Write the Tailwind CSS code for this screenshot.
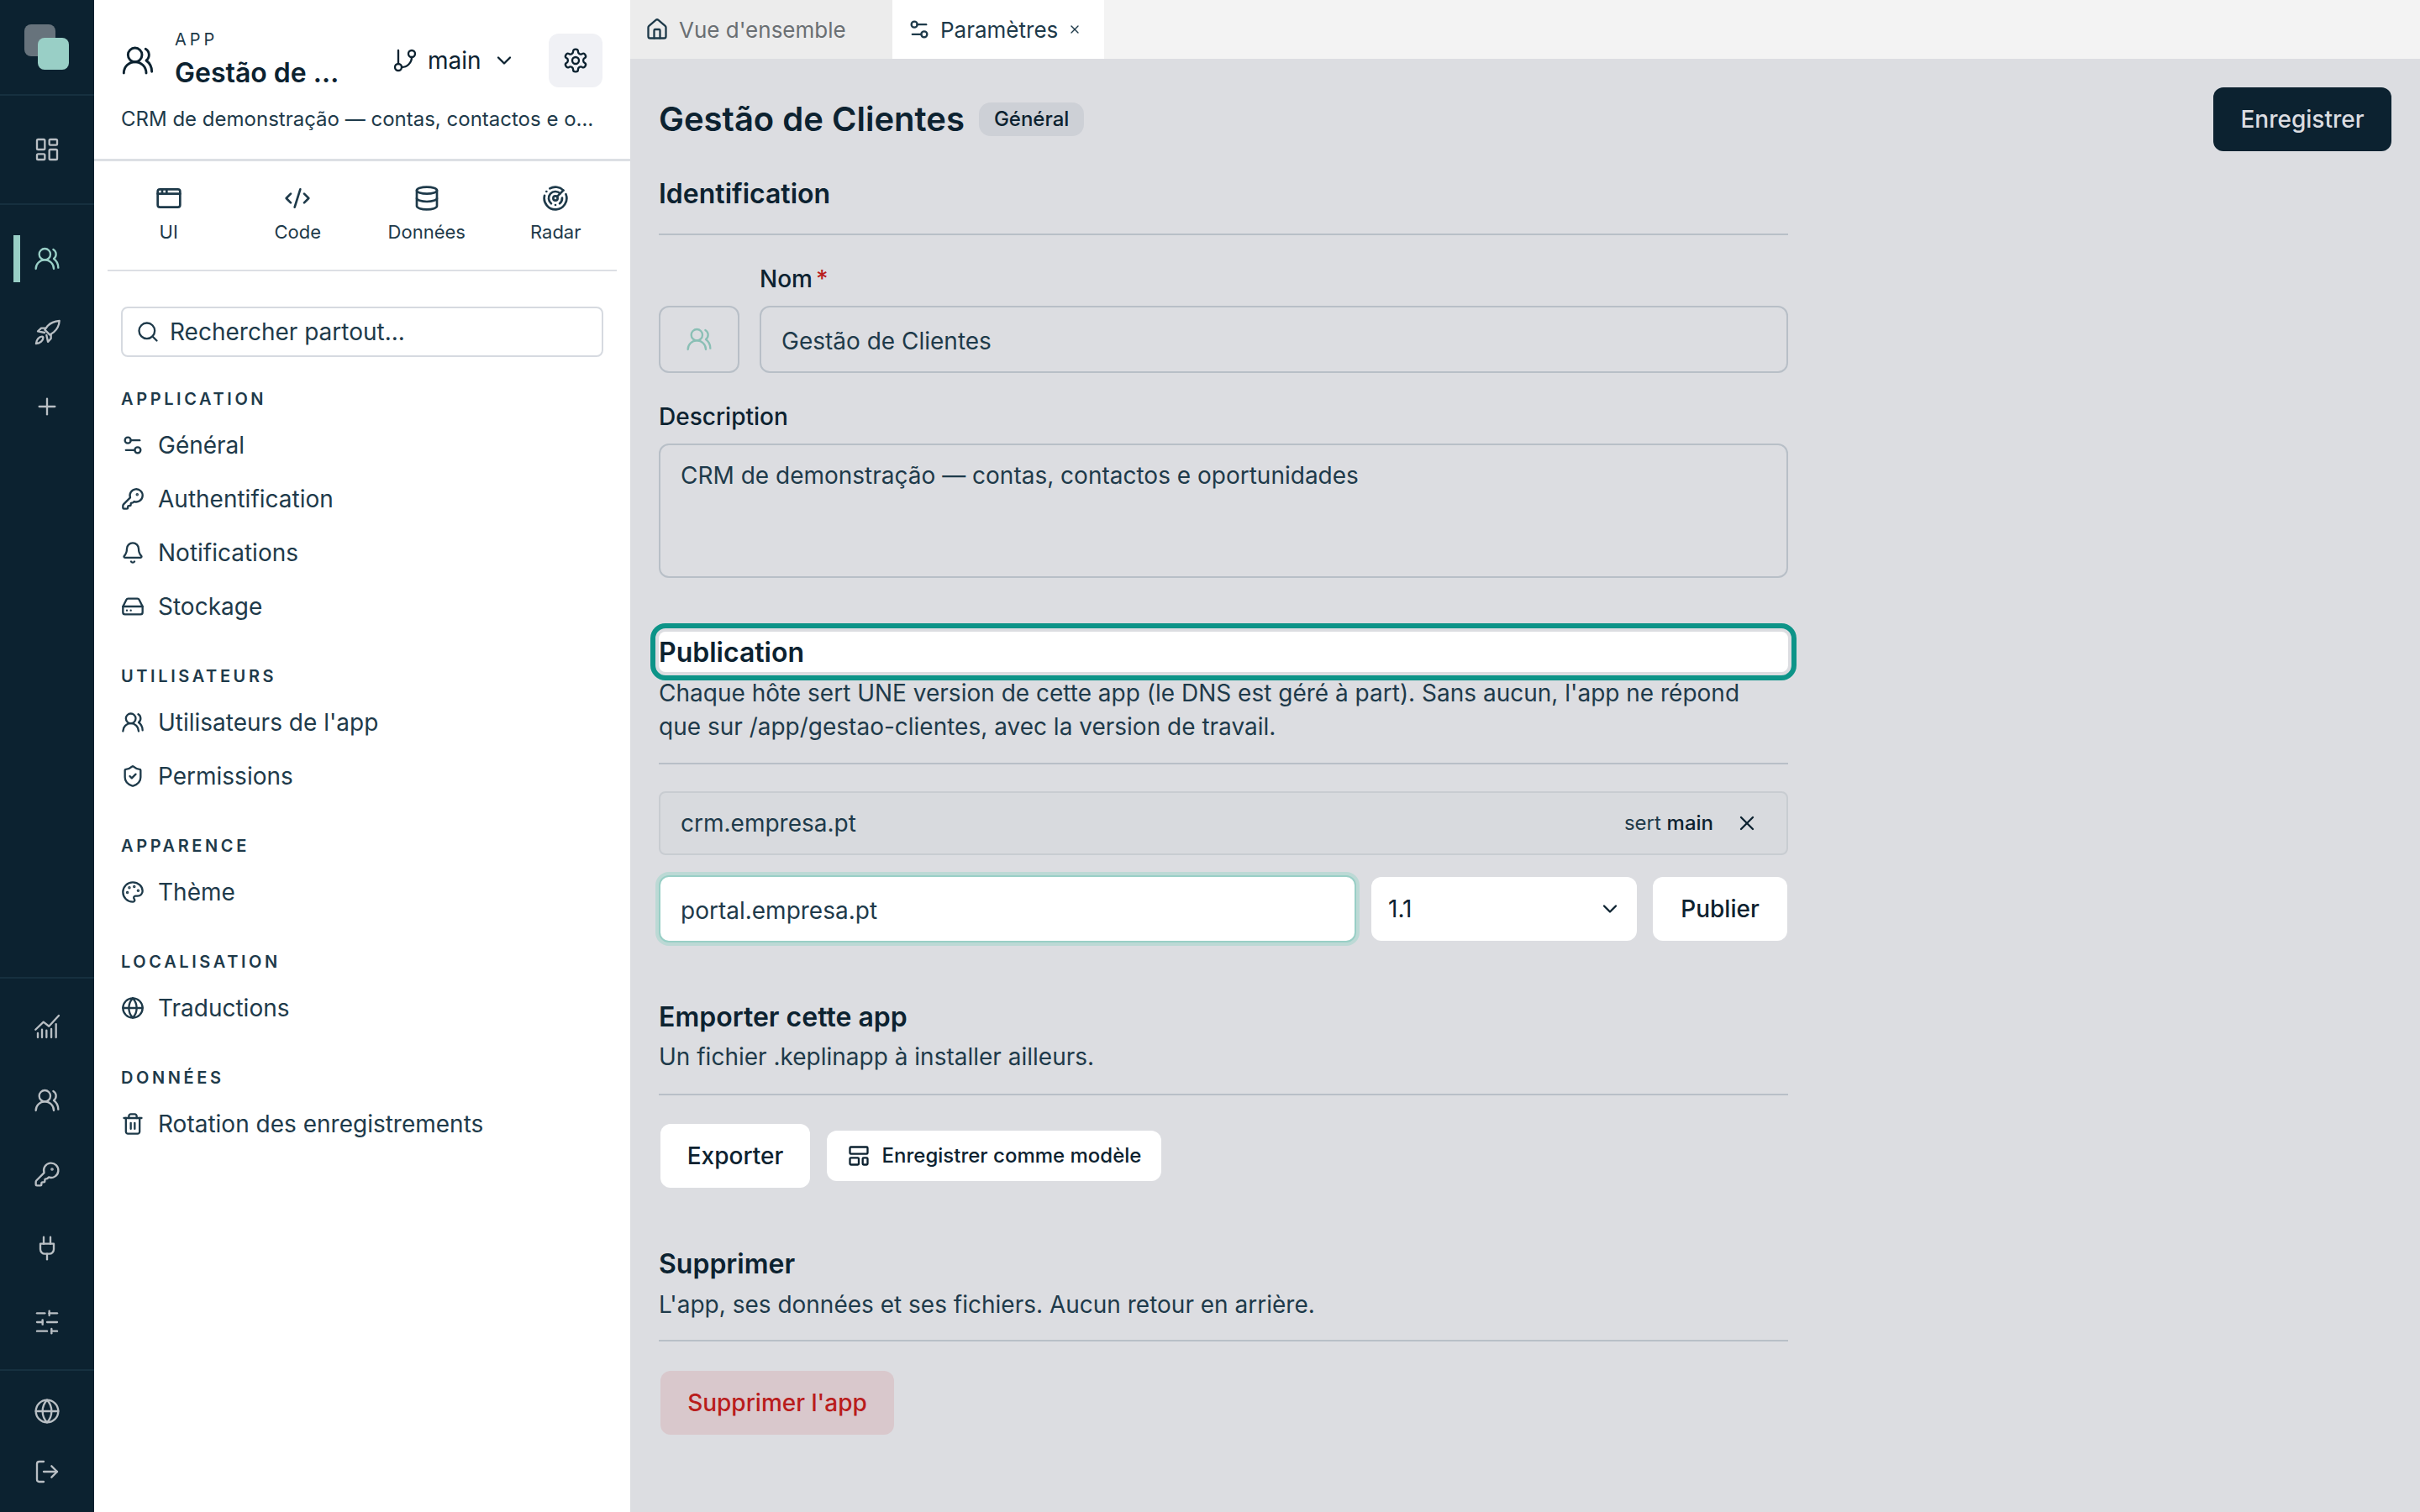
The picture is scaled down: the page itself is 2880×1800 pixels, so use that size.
<!DOCTYPE html>
<html lang="fr">
<head>
  <meta charset="UTF-8">
  <title>Gestão de Clientes - Paramètres</title>
  <script src="https://cdn.jsdelivr.net/npm/@tailwindcss/browser@4"></script>
</head>
<body class="h-screen overflow-hidden bg-[#dcdde1] font-['Inter',sans-serif] text-[#0c2230]">
  <!-- icon sprite -->
  <svg class="hidden">
    <defs>
      <g id="users" fill="none" stroke-linecap="round" stroke-linejoin="round"><path d="M18 21a8 8 0 0 0-16 0"/><circle cx="10" cy="8" r="5"/><path d="M22 20c0-3.37-2-6.5-4-8a5 5 0 0 0-.45-8.3"/></g>
      <g id="dashboard" fill="none" stroke-linecap="round" stroke-linejoin="round"><rect x="3" y="3" width="7" height="9" rx="1"/><rect x="14" y="3" width="7" height="5" rx="1"/><rect x="14" y="12" width="7" height="9" rx="1"/><rect x="3" y="16" width="7" height="5" rx="1"/></g>
      <g id="rocket" fill="none" stroke-linecap="round" stroke-linejoin="round"><path d="M23 1.5c-4.5.3-8 1.8-10.5 4.5L10 9.5l4.5 4.5 3.5-2.5C21 9 22.7 6 23 1.5z"/><path d="M10.5 8H6.8l-3 2.8 6 1.2"/><path d="M15.5 13.5v3.7l-2.7 3-1.3-6"/><path d="M7.5 15.5C5 15.5 2.5 18 2.2 21.8 6 21.5 8.5 19 8.5 16.5c0-.5-.4-1-1-1z"/></g>
      <g id="plus" fill="none" stroke-linecap="round"><path d="M5 12h14"/><path d="M12 5v14"/></g>
      <g id="chart" fill="none" stroke-linecap="round" stroke-linejoin="round"><path d="M1.7 14.8 8.8 8l4.9 3.8 8.8-9.5"/><path d="M3.75 21.8V18"/><path d="M7.5 21.8v-7"/><path d="M11.5 21.8v-6.3"/><path d="M15.8 21.8v-7.6"/><path d="M20 21.8V9.8"/></g>
      <g id="key" fill="none" stroke-linecap="round" stroke-linejoin="round"><path d="M2.586 17.414A2 2 0 0 0 2 18.828V21a1 1 0 0 0 1 1h3a1 1 0 0 0 1-1v-1a1 1 0 0 1 1-1h1a1 1 0 0 0 1-1v-1a1 1 0 0 1 1-1h.172a2 2 0 0 0 1.414-.586l.814-.814a6.5 6.5 0 1 0-4-4z"/><circle cx="16.5" cy="7.5" r=".5" fill="currentColor"/></g>
      <g id="plug" fill="none" stroke-linecap="round" stroke-linejoin="round"><path d="M12 22v-5"/><path d="M9 8V2"/><path d="M15 8V2"/><path d="M18 8v5a4 4 0 0 1-4 4h-4a4 4 0 0 1-4-4V8Z"/></g>
      <g id="sliders" fill="none" stroke-linecap="round" stroke-linejoin="round"><path d="M21 4h-7"/><path d="M10 4H3"/><path d="M21 12h-9"/><path d="M8 12H3"/><path d="M21 20h-5"/><path d="M12 20H3"/><path d="M14 2v4"/><path d="M8 10v4"/><path d="M16 18v4"/></g>
      <g id="globe" fill="none" stroke-linecap="round" stroke-linejoin="round"><circle cx="12" cy="12" r="10"/><path d="M12 2a14.5 14.5 0 0 0 0 20 14.5 14.5 0 0 0 0-20"/><path d="M2 12h20"/></g>
      <g id="logout" fill="none" stroke-linecap="round" stroke-linejoin="round"><path d="M9 21H5a2 2 0 0 1-2-2V5a2 2 0 0 1 2-2h4"/><path d="m16 17 5-5-5-5"/><path d="M21 12H9"/></g>
      <g id="branch" fill="none" stroke-linecap="round" stroke-linejoin="round"><path d="M6 3v12"/><circle cx="18" cy="6" r="3"/><circle cx="6" cy="18" r="3"/><path d="M18 9a9 9 0 0 1-9 9"/></g>
      <g id="chevron" fill="none" stroke-linecap="round" stroke-linejoin="round"><path d="m6 9 6 6 6-6"/></g>
      <g id="gear" fill="none" stroke-linecap="round" stroke-linejoin="round"><path d="M12.22 2h-.44a2 2 0 0 0-2 2v.18a2 2 0 0 1-1 1.73l-.43.25a2 2 0 0 1-2 0l-.15-.08a2 2 0 0 0-2.73.73l-.22.38a2 2 0 0 0 .73 2.73l.15.1a2 2 0 0 1 1 1.72v.51a2 2 0 0 1-1 1.74l-.15.09a2 2 0 0 0-.73 2.73l.22.38a2 2 0 0 0 2.73.73l.15-.08a2 2 0 0 1 2 0l.43.25a2 2 0 0 1 1 1.73V20a2 2 0 0 0 2 2h.44a2 2 0 0 0 2-2v-.18a2 2 0 0 1 1-1.73l.43-.25a2 2 0 0 1 2 0l.15.08a2 2 0 0 0 2.73-.73l.22-.39a2 2 0 0 0-.73-2.73l-.15-.08a2 2 0 0 1-1-1.74v-.5a2 2 0 0 1 1-1.74l.15-.09a2 2 0 0 0 .73-2.73l-.22-.38a2 2 0 0 0-2.73-.73l-.15.08a2 2 0 0 1-2 0l-.43-.25a2 2 0 0 1-1-1.73V4a2 2 0 0 0-2-2z"/><circle cx="12" cy="12" r="3"/></g>
      <g id="window" fill="none" stroke-linecap="round" stroke-linejoin="round"><rect x="2" y="4" width="20" height="16" rx="2"/><path d="M10 4v4"/><path d="M2 8h20"/><path d="M6 4v4"/></g>
      <g id="code" fill="none" stroke-linecap="round" stroke-linejoin="round"><path d="m18 16 4-4-4-4"/><path d="m6 8-4 4 4 4"/><path d="m14.5 4-5 16"/></g>
      <g id="database" fill="none" stroke-linecap="round" stroke-linejoin="round"><ellipse cx="12" cy="5" rx="9" ry="3"/><path d="M3 5v14a9 3 0 0 0 18 0V5"/><path d="M3 12a9 3 0 0 0 18 0"/></g>
      <g id="radar" fill="none" stroke-linecap="round" stroke-linejoin="round"><path d="M19.07 4.93A10 10 0 0 0 6.99 3.34"/><path d="M4 6h.01"/><path d="M2.29 9.62A10 10 0 1 0 21.31 8.35"/><path d="M16.24 7.76A6 6 0 1 0 8.23 16.67"/><path d="M12 18h.01"/><path d="M17.99 11.66A6 6 0 0 1 15.77 16.67"/><circle cx="12" cy="12" r="2"/><path d="m13.41 10.59 5.66-5.66"/></g>
      <g id="search" fill="none" stroke-linecap="round" stroke-linejoin="round"><circle cx="11" cy="11" r="8"/><path d="m21 21-4.3-4.3"/></g>
      <g id="settings2" fill="none" stroke-linecap="round" stroke-linejoin="round"><path d="M14 17H5"/><path d="M19 7h-9"/><circle cx="17" cy="17" r="3"/><circle cx="7" cy="7" r="3"/></g>
      <g id="bell" fill="none" stroke-linecap="round" stroke-linejoin="round"><path d="M10.268 21a2 2 0 0 0 3.464 0"/><path d="M3.262 15.326A1 1 0 0 0 4 17h16a1 1 0 0 0 .74-1.673C19.41 13.956 18 12.499 18 8A6 6 0 0 0 6 8c0 4.499-1.411 5.956-2.738 7.326"/></g>
      <g id="drive" fill="none" stroke-linecap="round" stroke-linejoin="round"><path d="M22 12H2"/><path d="M5.45 5.11 2 12v6a2 2 0 0 0 2 2h16a2 2 0 0 0 2-2v-6l-3.45-6.89A2 2 0 0 0 16.76 4H7.24a2 2 0 0 0-1.79 1.11z"/><path d="M6 16h.01"/><path d="M10 16h.01"/></g>
      <g id="shield" fill="none" stroke-linecap="round" stroke-linejoin="round"><path d="M20 13c0 5-3.5 7.5-7.66 8.95a1 1 0 0 1-.67-.01C7.5 20.5 4 18 4 13V6a1 1 0 0 1 1-1c2 0 4.5-1.2 6.24-2.72a1.17 1.17 0 0 1 1.52 0C14.51 3.81 17 5 19 5a1 1 0 0 1 1 1z"/><path d="m9 12 2 2 4-4"/></g>
      <g id="palette" fill="none" stroke-linecap="round" stroke-linejoin="round"><path d="M12 22a1 1 0 0 1 0-20 10 9 0 0 1 10 9 5 5 0 0 1-5 5h-2.25a1.75 1.75 0 0 0-1.4 2.8l.3.4a1.75 1.75 0 0 1-1.4 2.8z"/><circle cx="13.5" cy="6.5" r=".5" fill="currentColor"/><circle cx="17.5" cy="10.5" r=".5" fill="currentColor"/><circle cx="6.5" cy="12.5" r=".5" fill="currentColor"/><circle cx="8.5" cy="7.5" r=".5" fill="currentColor"/></g>
      <g id="trash" fill="none" stroke-linecap="round" stroke-linejoin="round"><path d="M3 6h18"/><path d="M19 6v14c0 1-1 2-2 2H7c-1 0-2-1-2-2V6"/><path d="M8 6V4c0-1 1-2 2-2h4c1 0 2 1 2 2v2"/><path d="M10 11v6"/><path d="M14 11v6"/></g>
      <g id="house" fill="none" stroke-linecap="round" stroke-linejoin="round"><path d="M15 21v-8a1 1 0 0 0-1-1h-4a1 1 0 0 0-1 1v8"/><path d="M3 10a2 2 0 0 1 .709-1.528l7-5.999a2 2 0 0 1 2.582 0l7 5.999A2 2 0 0 1 21 10v9a2 2 0 0 1-2 2H5a2 2 0 0 1-2-2z"/></g>
      <g id="close" fill="none" stroke-linecap="round" stroke-linejoin="round"><path d="M18 6 6 18"/><path d="m6 6 12 12"/></g>
      <g id="template" fill="none" stroke-linecap="round" stroke-linejoin="round"><rect x="3" y="3" width="18" height="7" rx="1"/><rect x="3" y="14" width="9" height="7" rx="1"/><rect x="16" y="14" width="5" height="7" rx="1"/></g>
    </defs>
  </svg>

  <div class="flex h-full">
    <!-- icon rail -->
    <aside class="flex w-[112px] shrink-0 flex-col bg-[#0c2230] text-[#b9bfc4]">
      <div class="h-[114px] shrink-0 border-b-2 border-[#16303f] pl-[29px] pt-[29px]">
        <div class="relative h-[54px] w-[53px]">
          <div class="h-[38px] w-[37px] rounded-[8px] bg-[#67737c]"></div>
          <div class="absolute left-[16px] top-[16px] h-[38px] w-[37px] rounded-[8px] bg-[#99cfc6]"></div>
        </div>
      </div>
      <div class="flex h-[130px] shrink-0 items-center justify-center border-b-2 border-[#16303f]">
        <svg viewBox="0 0 24 24" class="h-8 w-8 stroke-current stroke-[1.75]"><use href="#dashboard"/></svg>
      </div>
      <div class="pt-5">
        <div class="relative flex h-[88px] items-center justify-center text-[#99cfc6]">
          <span class="absolute left-4 top-4 h-14 w-2 bg-[#99cfc6]"></span>
          <svg viewBox="0 0 24 24" class="h-8 w-8 stroke-current stroke-[1.75]"><use href="#users"/></svg>
        </div>
        <div class="flex h-[88px] items-center justify-center"><svg viewBox="0 0 24 24" class="h-8 w-8 stroke-current stroke-[1.75]"><use href="#rocket"/></svg></div>
        <div class="flex h-[88px] items-center justify-center"><svg viewBox="0 0 24 24" class="h-8 w-8 stroke-current stroke-[1.75]"><use href="#plus"/></svg></div>
      </div>
      <div class="mt-auto border-b-2 border-t-2 border-[#16303f] pb-3 pt-[13px]">
        <div class="flex h-[88px] items-center justify-center"><svg viewBox="0 0 24 24" class="h-8 w-8 stroke-current stroke-[1.75]"><use href="#chart"/></svg></div>
        <div class="flex h-[88px] items-center justify-center"><svg viewBox="0 0 24 24" class="h-8 w-8 stroke-current stroke-[1.75]"><use href="#users"/></svg></div>
        <div class="flex h-[88px] items-center justify-center"><svg viewBox="0 0 24 24" class="h-8 w-8 stroke-current stroke-[1.75]"><use href="#key"/></svg></div>
        <div class="flex h-[88px] items-center justify-center"><svg viewBox="0 0 24 24" class="h-8 w-8 stroke-current stroke-[1.75]"><use href="#plug"/></svg></div>
        <div class="flex h-[88px] items-center justify-center"><svg viewBox="0 0 24 24" class="h-8 w-8 stroke-current stroke-[1.75]"><use href="#sliders"/></svg></div>
      </div>
      <div class="py-3">
        <div class="flex h-[72px] items-center justify-center"><svg viewBox="0 0 24 24" class="h-8 w-8 stroke-current stroke-[1.75]"><use href="#globe"/></svg></div>
        <div class="flex h-[72px] items-center justify-center"><svg viewBox="0 0 24 24" class="h-8 w-8 stroke-current stroke-[1.75]"><use href="#logout"/></svg></div>
      </div>
    </aside>

    <!-- app panel -->
    <aside class="w-[638px] shrink-0 bg-white text-[#1e3a4a]">
      <div class="h-[192px] border-b-[3px] border-[#dcdfe4] pl-8 pr-[33px]">
        <div class="flex h-[112px] items-start">
          <svg viewBox="0 0 24 24" class="mt-[52px] h-10 w-10 shrink-0 stroke-[#0c2230] stroke-[1.75]"><use href="#users"/></svg>
          <div class="ml-6 w-[230px] pt-7">
            <div class="text-[20px] leading-[38px] tracking-[0.2em] text-[#1e3a4a]">APP</div>
            <div class="w-[200px] truncate text-[32px] font-semibold leading-[42px] text-[#0c2230]">Gestão de Clientes</div>
          </div>
          <div class="mt-10 flex h-16 items-center text-[#0c2230]">
            <svg viewBox="0 0 24 24" class="ml-[28px] h-8 w-8 shrink-0 stroke-current stroke-[1.75]"><use href="#branch"/></svg>
            <span class="ml-[11px] text-[28px]">main</span>
            <svg viewBox="0 0 24 24" class="ml-[13px] h-7 w-7 stroke-current stroke-2"><use href="#chevron"/></svg>
          </div>
          <button class="ml-auto mt-10 flex h-16 w-16 items-center justify-center rounded-[12px] bg-[#f0f1f5] text-[#0c2230]">
            <svg viewBox="0 0 24 24" class="h-8 w-8 stroke-current stroke-[1.75]"><use href="#gear"/></svg>
          </button>
        </div>
        <p class="mt-3 truncate text-[24px] leading-9">CRM de demonstração — contas, contactos e oportunidades</p>
      </div>

      <div class="mx-4 h-[131px] border-b-2 border-[#dcdfe4] pt-[28px] text-[22px] leading-8 text-[#1e3a4a]">
        <div class="-ml-[4px] grid w-[614px] grid-cols-4 text-center">
          <div class="flex flex-col items-center gap-2"><svg viewBox="0 0 24 24" class="h-8 w-8 stroke-current stroke-2"><use href="#window"/></svg>UI</div>
          <div class="flex flex-col items-center gap-2"><svg viewBox="0 0 24 24" class="h-8 w-8 stroke-current stroke-2"><use href="#code"/></svg>Code</div>
          <div class="flex flex-col items-center gap-2"><svg viewBox="0 0 24 24" class="h-8 w-8 stroke-current stroke-2"><use href="#database"/></svg>Données</div>
          <div class="flex flex-col items-center gap-2"><svg viewBox="0 0 24 24" class="h-8 w-8 stroke-current stroke-2"><use href="#radar"/></svg>Radar</div>
        </div>
      </div>

      <div class="px-8 pt-[42px]">
        <div class="flex h-[60px] items-center rounded-[8px] border-2 border-[#d6dae0] pl-4">
          <svg viewBox="0 0 24 24" class="h-7 w-7 shrink-0 stroke-current stroke-2"><use href="#search"/></svg>
          <input class="ml-3 w-full bg-transparent text-[28px] outline-none placeholder:text-[#1e3a4a]" placeholder="Rechercher partout...">
        </div>

        <nav class="mt-[30px]">
          <h3 class="text-[20px] font-semibold leading-10 tracking-[0.18em]">APPLICATION</h3>
          <ul class="mt-[3px] text-[28px]">
            <li class="flex h-16 items-center gap-4"><svg viewBox="0 0 24 24" class="h-7 w-7 stroke-current stroke-2"><use href="#settings2"/></svg>Général</li>
            <li class="flex h-16 items-center gap-4"><svg viewBox="0 0 24 24" class="h-7 w-7 stroke-current stroke-2"><use href="#key"/></svg>Authentification</li>
            <li class="flex h-16 items-center gap-4"><svg viewBox="0 0 24 24" class="h-7 w-7 stroke-current stroke-2"><use href="#bell"/></svg>Notifications</li>
            <li class="flex h-16 items-center gap-4"><svg viewBox="0 0 24 24" class="h-7 w-7 stroke-current stroke-2"><use href="#drive"/></svg>Stockage</li>
          </ul>
          <h3 class="mt-[31px] text-[20px] font-semibold leading-10 tracking-[0.18em]">UTILISATEURS</h3>
          <ul class="mt-[3px] text-[28px]">
            <li class="flex h-16 items-center gap-4"><svg viewBox="0 0 24 24" class="h-7 w-7 stroke-current stroke-2"><use href="#users"/></svg>Utilisateurs de l'app</li>
            <li class="flex h-16 items-center gap-4"><svg viewBox="0 0 24 24" class="h-7 w-7 stroke-current stroke-2"><use href="#shield"/></svg>Permissions</li>
          </ul>
          <h3 class="mt-[31px] text-[20px] font-semibold leading-10 tracking-[0.18em]">APPARENCE</h3>
          <ul class="mt-[3px] text-[28px]">
            <li class="flex h-16 items-center gap-4"><svg viewBox="0 0 24 24" class="h-7 w-7 stroke-current stroke-2"><use href="#palette"/></svg>Thème</li>
          </ul>
          <h3 class="mt-[31px] text-[20px] font-semibold leading-10 tracking-[0.18em]">LOCALISATION</h3>
          <ul class="mt-[3px] text-[28px]">
            <li class="flex h-16 items-center gap-4"><svg viewBox="0 0 24 24" class="h-7 w-7 stroke-current stroke-2"><use href="#globe"/></svg>Traductions</li>
          </ul>
          <h3 class="mt-[31px] text-[20px] font-semibold leading-10 tracking-[0.18em]">DONNÉES</h3>
          <ul class="mt-[3px] text-[28px]">
            <li class="flex h-16 items-center gap-4"><svg viewBox="0 0 24 24" class="h-7 w-7 stroke-current stroke-2"><use href="#trash"/></svg>Rotation des enregistrements</li>
          </ul>
        </nav>
      </div>
    </aside>

    <!-- main -->
    <main class="min-w-0 flex-1">
      <div class="flex h-[70px] bg-[#f3f3f3] text-[26px]">
        <div class="flex w-[312px] items-center bg-[#ececec] pl-[18px] text-[#6a6f73]">
          <svg viewBox="0 0 24 24" class="h-7 w-7 shrink-0 stroke-[#1e3a4a] stroke-2"><use href="#house"/></svg>
          <span class="ml-3">Vue d'ensemble</span>
        </div>
        <div class="flex w-[252px] items-center bg-white pl-[18px] text-[#1e3a4a]">
          <svg viewBox="0 0 24 24" class="h-7 w-7 shrink-0 stroke-current stroke-2"><use href="#settings2"/></svg>
          <span class="ml-[11px]">Paramètres</span>
          <svg viewBox="0 0 24 24" class="ml-3 h-4 w-4 stroke-current stroke-2"><use href="#close"/></svg>
        </div>
      </div>

      <div class="pl-[34px] pr-[34px] pt-[34px]">
        <div class="flex h-[76px] items-center">
          <h1 class="text-[40px] font-semibold">Gestão de Clientes</h1>
          <span class="ml-[17px] flex h-10 items-center rounded-[14px] bg-[#cdd0d6] px-[18px] text-[24px] font-medium">Général</span>
          <button class="ml-auto h-[76px] w-[212px] rounded-[12px] bg-[#0c2230] text-[28px] font-medium text-[#dcdde1]">Enregistrer</button>
        </div>

        <div class="w-[1344px]">
          <h2 class="mt-[27px] text-[32px] font-semibold leading-[48px]">Identification</h2>
          <div class="mt-[23px] h-0.5 bg-[#b8bfc7]"></div>

          <div class="mt-8 flex gap-6">
            <div class="mt-[52px] flex h-20 w-24 shrink-0 items-center justify-center rounded-[12px] border-2 border-[#b8bfc7]">
              <svg viewBox="0 0 24 24" class="h-8 w-8 stroke-[#8abfb5] stroke-[1.75]"><use href="#users"/></svg>
            </div>
            <div class="flex-1">
              <label class="block pt-px text-[28px] font-medium leading-[39px]">Nom<span class="ml-1 text-[#b91c1c]">*</span></label>
              <input class="mt-3 h-20 w-full rounded-[12px] border-2 border-[#b8bfc7] bg-transparent px-6 pt-[3px] text-[28px] text-[#1e3a4a] outline-none" value="Gestão de Clientes">
            </div>
          </div>

          <label class="mt-8 block text-[28px] font-medium leading-10">Description</label>
          <textarea class="mt-3 block h-40 w-full resize-none rounded-[12px] border-2 border-[#b8bfc7] bg-transparent px-6 py-4 text-[28px] leading-10 text-[#1e3a4a] outline-none">CRM de demonstração — contas, contactos e oportunidades</textarea>

          <h2 class="mt-16 h-12 rounded-[8px] bg-white text-[32px] font-semibold leading-[50px] outline-[6px] outline-offset-4 outline-[#0d9488]">Publication</h2>
          <p class="mt-[5px] text-[28px] leading-10 text-[#1e3a4a]">Chaque hôte sert UNE version de cette app (le DNS est géré à part). Sans aucun, l'app ne répond<br>que sur /app/gestao-clientes, avec la version de travail.</p>
          <div class="mt-[23px] h-0.5 bg-[#b8bfc7]"></div>

          <div class="mt-8 flex h-[76px] items-center rounded-[8px] border-2 border-[#c8ccd1] bg-[#d8dade] pl-6 pr-[33px]">
            <span class="text-[28px] text-[#1e3a4a]">crm.empresa.pt</span>
            <span class="ml-auto text-[24px] text-[#1e3a4a]">sert <span class="font-medium text-[#0c2230]">main</span></span>
            <svg viewBox="0 0 24 24" class="ml-[26px] h-7 w-7 stroke-current stroke-2"><use href="#close"/></svg>
          </div>

          <div class="mt-[26px] flex h-[76px] items-center">
            <input class="h-20 w-[830px] shrink-0 rounded-[12px] border-2 border-[#99cfc6] bg-white px-6 pt-[3px] text-[28px] text-[#1e3a4a] shadow-[0_0_0_4px_#bcd9d5] outline-none" value="portal.empresa.pt">
            <div class="ml-[18px] flex h-[76px] w-[316px] items-center rounded-[12px] bg-white pl-5 pr-[18px] text-[28px]">
              <span>1.1</span>
              <svg viewBox="0 0 24 24" class="ml-auto h-7 w-7 stroke-current stroke-2"><use href="#chevron"/></svg>
            </div>
            <button class="ml-[19px] h-[76px] w-[160px] rounded-[12px] bg-white text-[28px] font-medium">Publier</button>
          </div>

          <h2 class="mt-[67px] text-[32px] font-semibold leading-[48px]">Emporter cette app</h2>
          <p class="mt-[3px] text-[28px] leading-10 text-[#1e3a4a]">Un fichier .keplinapp à installer ailleurs.</p>
          <div class="mt-6 h-0.5 bg-[#b8bfc7]"></div>

          <div class="mt-[34px] flex items-center gap-5 pl-0.5">
            <button class="h-[76px] w-[178px] rounded-[12px] bg-white text-[28px] font-medium">Exporter</button>
            <button class="flex h-[60px] w-[398px] items-center justify-center gap-[14px] rounded-[12px] bg-white text-[24px] font-medium">
              <svg viewBox="0 0 24 24" class="h-7 w-7 stroke-current stroke-2"><use href="#template"/></svg>Enregistrer comme modèle
            </button>
          </div>

          <h2 class="mt-[67px] text-[32px] font-semibold leading-[48px]">Supprimer</h2>
          <p class="mt-1 text-[28px] leading-10 text-[#1e3a4a]">L'app, ses données et ses fichiers. Aucun retour en arrière.</p>
          <div class="mt-[22px] h-0.5 bg-[#b8bfc7]"></div>

          <button class="ml-0.5 mt-[35px] h-[76px] w-[278px] rounded-[12px] bg-[#d9c8cc] text-[28px] font-medium text-[#b91c1c]">Supprimer l'app</button>
        </div>
      </div>
    </main>
  </div>
</body>
</html>
